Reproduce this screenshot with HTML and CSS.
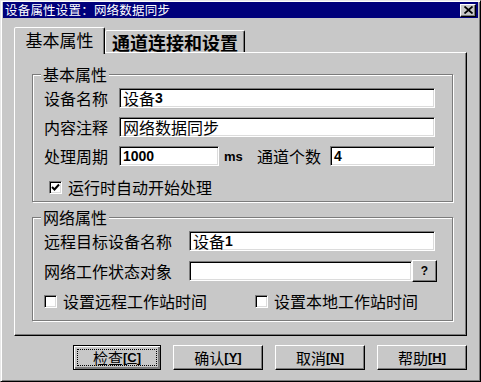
FILE: index.html
```html
<!DOCTYPE html>
<html lang="zh-CN">
<head>
<meta charset="utf-8">
<title>设备属性设置</title>
<link rel="stylesheet" href="styles.css">
</head>
<body>
<div class="window">
  <div class="titlebar">
    <span class="title">设备属性设置：网络数据同步</span>
    <span class="close"><svg width="9" height="8" viewBox="0 0 9 8"><path d="M0.5 0.5L8.5 7.5M8.5 0.5L0.5 7.5" stroke="#000" stroke-width="1.8" fill="none"/></svg></span>
  </div>
  <div class="content">
    <div class="tabs">
      <div class="tab active">基本属性</div>
      <div class="tab inactive">通道连接和设置</div>
    </div>
    <div class="panel">
      <div class="group g1">
        <div class="legend">基本属性</div>
        <div class="row">
          <span class="lbl w75">设备名称</span>
          <div class="field grow">设备<b>3</b></div>
        </div>
        <div class="row">
          <span class="lbl w75">内容注释</span>
          <div class="field grow">网络数据同步</div>
        </div>
        <div class="row">
          <span class="lbl w75">处理周期</span>
          <div class="field w100"><b>1000</b></div>
          <span class="unit">ms</span>
          <span class="lbl w73">通道个数</span>
          <div class="field grow"><b>4</b></div>
        </div>
        <div class="row check-row1">
          <span class="checkbox checked"><svg width="9" height="9" viewBox="0 0 9 9"><path d="M1 4L3.5 6.5L8 1.5" stroke="#000" stroke-width="2" fill="none"/></svg></span>
          <span class="cblabel">运行时自动开始处理</span>
        </div>
      </div>
      <div class="group g2">
        <div class="legend">网络属性</div>
        <div class="row">
          <span class="lbl w145">远程目标设备名称</span>
          <div class="field grow">设备<b>1</b></div>
        </div>
        <div class="row r22">
          <span class="lbl w145">网络工作状态对象</span>
          <div class="field grow"></div>
          <span class="qbtn">?</span>
        </div>
        <div class="row check-row2">
          <span class="cbitem first"><span class="checkbox"></span><span class="cblabel">设置远程工作站时间</span></span>
          <span class="cbitem"><span class="checkbox"></span><span class="cblabel">设置本地工作站时间</span></span>
        </div>
      </div>
    </div>
    <div class="buttons">
      <div class="btn default"><span class="focus">检查<b>[<u>C</u>]</b></span></div>
      <div class="btn">确认<b>[<u>Y</u>]</b></div>
      <div class="btn">取消<b>[<u>N</u>]</b></div>
      <div class="btn">帮助<b>[<u>H</u>]</b></div>
    </div>
  </div>
</div>
</body>
</html>
```
FILE: styles.css
```css
* { box-sizing: border-box; }
html, body { margin: 0; padding: 0; }
body {
  width: 481px;
  height: 382px;
  overflow: hidden;
  background: #c8c8c8;
  font-family: "Noto Sans CJK SC", "Liberation Sans", sans-serif;
  color: #000;
}
b { font-family: "Liberation Sans", "Noto Sans CJK SC", sans-serif; font-weight: bold; }
.window {
  width: 481px;
  height: 382px;
  background: #c8c8c8;
  border: 1px solid;
  border-color: #e8e8e8 #000 #000 #e8e8e8;
  box-shadow: inset 1px 1px 0 #fff, inset -1px -1px 0 #7b7b7b;
  padding: 1px 2px 2px 2px;
  display: flex;
  flex-direction: column;
}
.titlebar {
  height: 16px;
  background: #00007b;
  display: flex;
  align-items: center;
  justify-content: space-between;
  padding: 0 2px 0 2px;
}
.title {
  color: #fff;
  font-size: 12.5px;
  line-height: 16px;
  letter-spacing: 0.2px;
}
.close {
  width: 16px;
  height: 13px;
  background: #c8c8c8;
  border: 1px solid;
  border-color: #fff #000 #000 #fff;
  box-shadow: inset -1px -1px 0 #7b7b7b;
  display: flex;
  align-items: center;
  justify-content: center;
}
.content {
  flex: 1;
  padding: 9px 11px 0 11px;
  display: flex;
  flex-direction: column;
}
.tabs {
  display: flex;
  align-items: flex-end;
  height: 25px;
  position: relative;
  z-index: 1;
}
.tab {
  border: 1px solid;
  border-bottom: none;
  border-color: #fff #000 transparent #fff;
  box-shadow: inset -1px 0 0 #7b7b7b;
  border-radius: 2px 2px 0 0;
  background: #c8c8c8;
  font-size: 17px;
  display: flex;
  align-items: center;
  justify-content: center;
  white-space: nowrap;
}
.tab.active {
  width: 91px;
  height: 27px;
  margin-bottom: -2px;
  padding-bottom: 3px;
}
.tab.inactive {
  width: 140px;
  height: 22px;
  font-weight: bold;
  font-size: 18px;
  padding-top: 1px;
}
.panel {
  height: 284px;
  border: 1px solid;
  border-color: #fff #000 #000 #fff;
  box-shadow: inset -1px -1px 0 #7b7b7b;
  padding: 21px 0 0 17px;
  display: flex;
  flex-direction: column;
  gap: 15px;
}
.group {
  width: 421px;
  border: 1px solid #7b7b7b;
  box-shadow: inset 1px 1px 0 #fff, 1px 1px 0 #fff;
  padding: 0 17px 0 11px;
  display: flex;
  flex-direction: column;
}
.g1 { height: 128px; gap: 9px; }
.g2 { height: 104px; gap: 9px; }
.legend {
  width: fit-content;
  margin: -10px 0 -4px -3px;
  padding: 0 2px;
  background: #c8c8c8;
  font-size: 16px;
  line-height: 18px;
  height: 18px;
}
.row {
  display: flex;
  align-items: center;
  height: 20px;
  font-size: 16px;
}
.r22 { height: 22px; }
.lbl { white-space: nowrap; line-height: 20px; }
.w75 { width: 75px; flex: none; }
.w73 { width: 73px; flex: none; }
.w145 { width: 145px; flex: none; }
.field {
  height: 20px;
  background: #fff;
  border: 1px solid;
  border-color: #7b7b7b #fff #fff #7b7b7b;
  box-shadow: inset 1px 1px 0 #000, inset -1px -1px 0 #dcdcdc;
  padding: 0 2px 0 3px;
  font-size: 16px;
  display: flex;
  align-items: center;
  white-space: nowrap;
}
.field b { font-size: 14px; }
.grow { flex: 1; }
.w100 { width: 100px; flex: none; }
.unit {
  width: 38px;
  flex: none;
  padding-left: 5px;
  font-family: "Liberation Sans", sans-serif;
  font-weight: bold;
  font-size: 13px;
}
.checkbox {
  width: 13px;
  height: 13px;
  flex: none;
  background: #fff;
  border: 1px solid;
  border-color: #7b7b7b #fff #fff #7b7b7b;
  box-shadow: inset 1px 1px 0 #000, inset -1px -1px 0 #dcdcdc;
  display: flex;
  align-items: center;
  justify-content: center;
}
.check-row1 { padding-left: 5px; margin-top: 2px; }
.check-row1 .cblabel { margin-left: 6px; }
.cbitem { display: flex; align-items: center; }
.cbitem.first { width: 211px; }
.cbitem .cblabel { margin-left: 6px; }
.cblabel { white-space: nowrap; font-size: 16px; }
.qbtn {
  width: 25px;
  height: 22px;
  flex: none;
  margin-right: -2px;
  background: #c8c8c8;
  border: 1px solid;
  border-color: #fff #000 #000 #fff;
  box-shadow: inset -1px -1px 0 #7b7b7b;
  font-family: "Liberation Sans", sans-serif;
  font-weight: bold;
  font-size: 12px;
  display: flex;
  align-items: center;
  justify-content: center;
}
.buttons {
  margin-top: 9px;
  display: flex;
  justify-content: flex-end;
  gap: 12px;
}
.btn {
  width: 90px;
  height: 25px;
  background: #c8c8c8;
  border: 1px solid;
  border-color: #fff #000 #000 #fff;
  box-shadow: inset -1px -1px 0 #7b7b7b;
  display: flex;
  align-items: center;
  justify-content: center;
  font-size: 15px;
  white-space: nowrap;
}
.btn b { font-size: 13px; }
.btn.default {
  width: 88px;
  border: 1px solid #000;
  box-shadow: inset 1px 1px 0 #fff, inset -2px -2px 0 #7b7b7b, inset -1px -1px 0 #000;
  padding: 3px;
}
.focus {
  flex: 1;
  align-self: stretch;
  border: 1px dotted #000;
  display: flex;
  align-items: center;
  justify-content: center;
}
```
